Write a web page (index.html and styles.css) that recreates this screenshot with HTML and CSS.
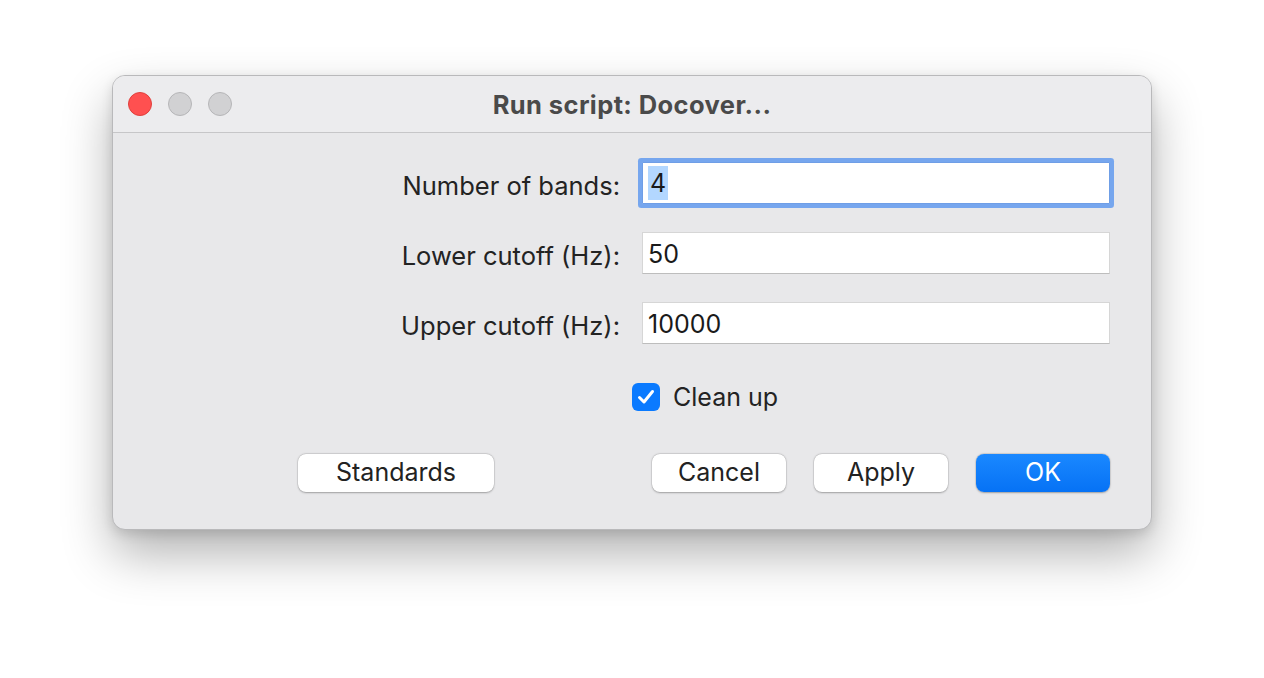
FILE: index.html
```html
<!DOCTYPE html>
<html>
<head>
<meta charset="utf-8">
<link rel="stylesheet" href="styles.css">
</head>
<body>
<div class="stage">
  <div class="window">
    <div class="titlebar">
      <div class="lights">
        <span class="light red"></span>
        <span class="light gray"></span>
        <span class="light gray"></span>
      </div>
      <div class="title">Run script: Docover...</div>
    </div>
    <div class="content">
      <div class="form">
        <label class="label">Number of bands:</label>
        <div class="field focused"><span class="sel">4</span></div>
        <label class="label">Lower cutoff (Hz):</label>
        <div class="field">50</div>
        <label class="label">Upper cutoff (Hz):</label>
        <div class="field">10000</div>
      </div>
      <div class="check-row">
        <span class="checkbox">
          <svg width="18" height="16" viewBox="0 0 18 16"><path d="M2.5 8.5 L7 13 L15.5 2.5" fill="none" stroke="#fff" stroke-width="3" stroke-linecap="round" stroke-linejoin="round"/></svg>
        </span>
        <span class="check-label">Clean up</span>
      </div>
      <div class="buttons">
        <button class="btn std">Standards</button>
        <button class="btn push">Cancel</button>
        <button class="btn">Apply</button>
        <button class="btn primary">OK</button>
      </div>
    </div>
  </div>
</div>
</body>
</html>
```
FILE: styles.css
```css
html, body {
  margin: 0;
  padding: 0;
  background: #ffffff;
}
body {
  width: 1264px;
  height: 678px;
  overflow: hidden;
  font-family: Inter, "Liberation Sans", sans-serif;
}
.stage {
  padding: 75px 0 0 112px;
}
.window {
  width: 1040px;
  height: 455px;
  box-sizing: border-box;
  border-radius: 13px;
  background: #e8e8ea;
  border: 1px solid #b9b9bb;
  box-shadow: 0 24px 50px rgba(0,0,0,0.30), 0 4px 12px rgba(0,0,0,0.12);
  overflow: hidden;
  display: flex;
  flex-direction: column;
}
.titlebar {
  height: 56px;
  flex: 0 0 56px;
  background: #ececee;
  border-bottom: 1px solid #c6c6c8;
  display: flex;
  align-items: center;
  position: relative;
}
.lights {
  display: flex;
  gap: 16px;
  padding-left: 15px;
}
.light {
  width: 24px;
  height: 24px;
  border-radius: 50%;
  box-sizing: border-box;
}
.red {
  background: #ff5050;
  border: 1px solid #e0403c;
}
.gray {
  background: #d1d1d3;
  border: 1px solid #b6b6b8;
}
.title {
  position: absolute;
  left: 0;
  right: 0;
  text-align: center;
  font-weight: 700;
  font-size: 25.5px;
  color: #4a4a4a;
  letter-spacing: 0.4px;
  padding-top: 1px;
}
.content {
  padding: 29px 41px 0 0;
  display: flex;
  flex-direction: column;
}
.form {
  display: grid;
  grid-template-columns: 1fr 468px;
  column-gap: 22px;
  row-gap: 28px;
  align-items: center;
}
.label {
  text-align: right;
  font-size: 25.5px;
  color: #232323;
  padding-top: 4px;
}
.field {
  height: 42px;
  box-sizing: border-box;
  background: #ffffff;
  border: 1px solid #d6d6d6;
  border-bottom-color: #bdbdbd;
  font-size: 25px;
  color: #1a1a1a;
  padding-left: 5px;
  padding-top: 2px;
  display: flex;
  align-items: center;
}
.field.focused {
  border: 1px solid #6f9ee6;
  box-shadow: 0 0 0 4px #76a6ee;
  border-radius: 1px;
  padding-top: 0;
}
.sel {
  background: #b3d7ff;
  padding: 0 2px;
  line-height: 34px;
}
.check-row {
  display: flex;
  align-items: center;
  margin-top: 38px;
  padding-left: 519px;
  gap: 13px;
}
.checkbox {
  width: 28px;
  height: 28px;
  border-radius: 6px;
  background: #0a7aff;
  display: flex;
  align-items: center;
  justify-content: center;
  flex: 0 0 28px;
}
.check-label {
  font-size: 25px;
  color: #232323;
}
.buttons {
  display: flex;
  margin-top: 42px;
  padding-left: 185px;
  gap: 28px;
}
.btn {
  flex: 0 0 134px;
  height: 38px;
  width: 134px;
  border: none;
  border-radius: 8px;
  background: #ffffff;
  box-shadow: 0 0.5px 2px rgba(0,0,0,0.28), 0 0 0 0.5px rgba(0,0,0,0.10);
  font-family: Inter, "Liberation Sans", sans-serif;
  font-size: 25px;
  color: #222;
  padding: 0 0 3px 0;
}
.btn.std {
  flex-basis: 196px;
  width: 196px;
}
.btn.push {
  margin-left: auto;
}
.btn.primary {
  background: linear-gradient(#1a88ff, #0672f5);
  color: #ffffff;
}
```
